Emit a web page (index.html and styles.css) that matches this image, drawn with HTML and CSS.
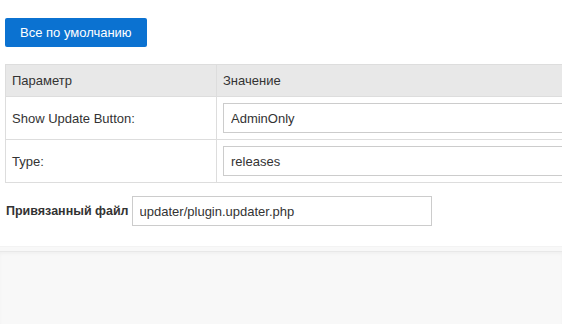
FILE: index.html
```html
<!DOCTYPE html>
<html lang="ru">
<head>
    <meta charset="UTF-8">
    <title>Настройки плагина</title>
    <link rel="stylesheet" href="styles.css">
</head>
<body>
    <main class="panel">
        <div class="toolbar">
            <button class="btn-primary" type="button">Все по умолчанию</button>
        </div>

        <table class="settings">
            <thead>
                <tr>
                    <th class="col-name">Параметр</th>
                    <th>Значение</th>
                </tr>
            </thead>
            <tbody>
                <tr>
                    <td>Show Update Button:</td>
                    <td><input class="field" type="text" value="AdminOnly"></td>
                </tr>
                <tr>
                    <td>Type:</td>
                    <td><input class="field" type="text" value="releases"></td>
                </tr>
            </tbody>
        </table>

        <div class="file-row">
            <label class="file-label">Привязанный файл</label>
            <input class="field file-field" type="text" value="updater/plugin.updater.php">
        </div>
    </main>

    <footer class="footer"></footer>
</body>
</html>
```

FILE: styles.css
```css
/* базовые цвета */
:root {
    --font-main: "Helvetica Neue", "Liberation Sans", Arial, sans-serif;
    --color-brand: #0b72d1;
    --color-text: #333;
    --color-border: #ddd;
    --color-head: #e8e8e8;
}

html, body { height: 100%; }

body {
    margin: 0;
    font-family: var(--font-main);
    font-size: 13px;
    color: var(--color-text);
    background: #f8f8f8;
    display: flex;
    flex-direction: column;
    overflow: hidden;
}

.panel {
    background: #fff;
    padding: 18px 0 20px 5px;
    border-bottom: 1px solid #f3f3f3;
    overflow: hidden;
}

/* кнопка */
.toolbar { margin-bottom: 17px; }

.btn-primary {
    font-family: var(--font-main);
    font-size: 13px;
    font-weight: 500;
    color: #fff;
    background: var(--color-brand);
    border: 0;
    border-radius: 2px;
    height: 29px;
    padding: 0 15px;
    cursor: pointer;
}

/* таблица параметров (уходит за правый край) */
.settings {
    width: calc(100% + 60px);
    table-layout: fixed;
    border-collapse: collapse;
    border: 1px solid var(--color-border);
    border-right: 0;
}

.settings th,
.settings td {
    border: 1px solid var(--color-border);
    padding: 0 6px;
    text-align: left;
    font-weight: normal;
}

.settings th {
    background: var(--color-head);
    height: 31px;
}

.settings td { height: 42px; }

.settings .col-name { width: 198px; }

.field {
    font-family: var(--font-main);
    font-size: 13px;
    color: var(--color-text);
    box-sizing: border-box;
    height: 30px;
    padding: 0 7px;
    border: 1px solid #ccc;
    background: #fff;
    outline: none;
}

.settings .field { width: 100%; display: block; }

/* привязанный файл */
.file-row {
    display: flex;
    align-items: center;
    gap: 3px;
    margin-top: 13px;
}

.file-label { font-weight: bold; font-size: 12.5px; padding-left: 1px; }

.file-field { width: 300px; height: 30px; }

.footer {
    flex: 1;
    border-top: 1px solid #e8e8e8;
    margin-top: 4px;
    box-shadow: inset 0 2px 3px rgba(0, 0, 0, 0.03);
}
```
